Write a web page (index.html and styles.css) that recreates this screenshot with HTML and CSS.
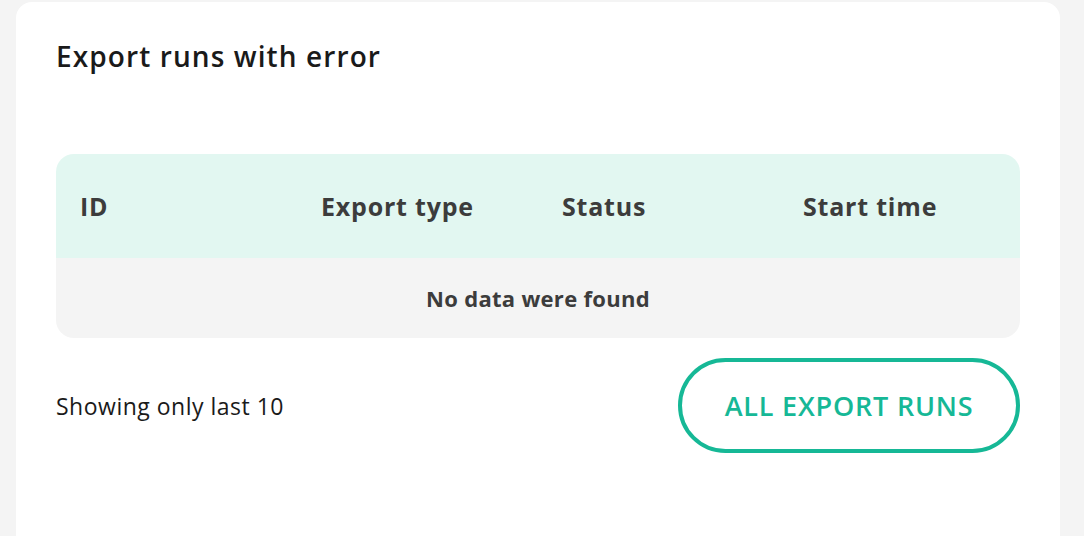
FILE: index.html
```html
<!doctype html>
<html>
<head>
<meta charset="utf-8">
<title>Export runs with error</title>
<link rel="stylesheet" href="styles.css">
</head>
<body>
<div class="card">
	<h2 class="title">Export runs with error</h2>
	<div class="table">
		<div class="thead">
			<div class="th">ID</div>
			<div class="th">Export type</div>
			<div class="th">Status</div>
			<div class="th">Start time</div>
		</div>
		<div class="empty">No data were found</div>
	</div>
	<div class="foot">
		<span class="note">Showing only last 10</span>
		<a href="javascript:;" class="btn">ALL EXPORT RUNS</a>
	</div>
</div>
</body>
</html>
```

FILE: styles.css
```css
*{margin:0; padding:0; box-sizing:border-box;}
body{background:#f4f4f4; padding:2px 24px 0 16px; font-family:"Open Sans", "Liberation Sans", sans-serif; overflow:hidden; height:536px;}
.card{background:#fff; border-radius:16px; min-height:580px; padding:32px 40px;}
.title{font-size:28px; font-weight:600; line-height:44px; color:#1a1a1a; letter-spacing:1.1px;}
.table{margin-top:76px; border-radius:18px; overflow:hidden;}
.thead{display:grid; grid-template-columns:repeat(4,1fr); height:104px; align-items:center; background:#e2f7f1;}
.th{padding-left:24px; font-size:25px; font-weight:700; color:#3c3c3c; letter-spacing:0.8px;}
.empty{height:80px; background:#f4f4f4; display:flex; align-items:center; justify-content:center; font-size:22px; font-weight:700; color:#3c3c3c; letter-spacing:0.3px;}
.foot{margin-top:20px; display:flex; align-items:center; justify-content:space-between;}
.note{font-size:23px; color:#1a1a1a; letter-spacing:0.5px;}
.btn{width:342px; height:95px; border:4px solid #16b896; border-radius:48px; display:flex; align-items:center; justify-content:center; font-size:27px; font-weight:600; color:#16b896; text-decoration:none; letter-spacing:0.8px;}
```
